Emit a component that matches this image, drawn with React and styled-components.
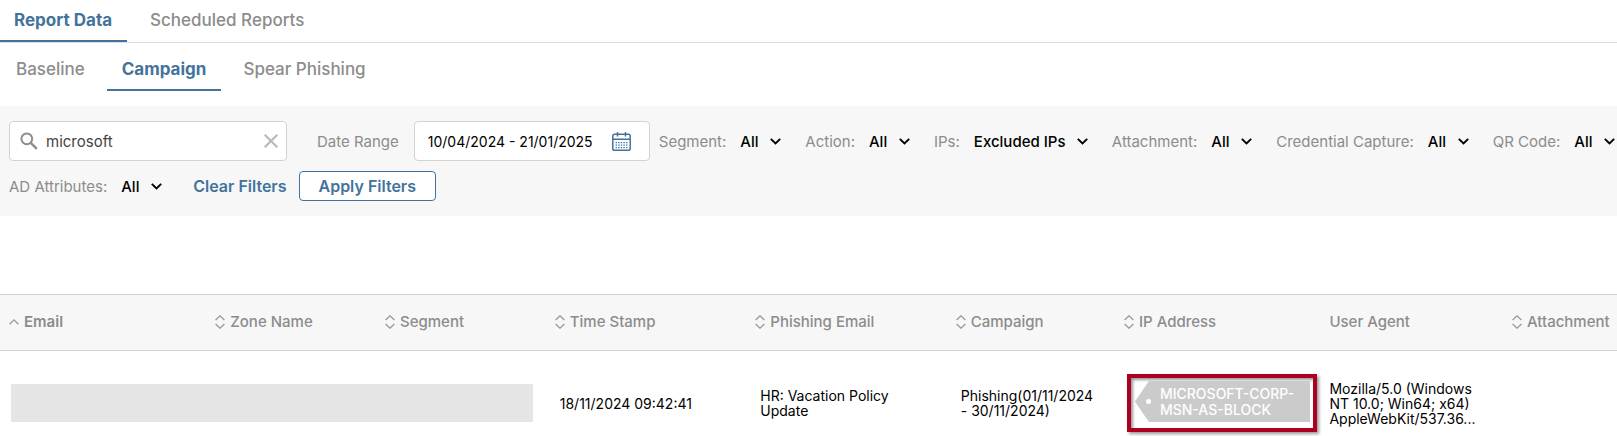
import { useState } from 'react';
import styled, { createGlobalStyle } from 'styled-components';

const GlobalStyle = createGlobalStyle`
  * {
    box-sizing: border-box;
  }
  body {
    margin: 0;
    background: #fff;
    color: #000;
    font-family: Inter, 'Open Sans', sans-serif;
    font-size: 14px;
    overflow-x: hidden;
  }
  button,
  input,
  select {
    font: inherit;
    color: inherit;
  }
`;

const MainTabs = styled.nav`
  display: flex;
  height: 43px;
  border-bottom: 1px solid #dcdcdc;
`;

const SubTabs = styled.nav`
  display: flex;
  height: 48px;
  margin-bottom: 15px;
  padding-left: 1px;
`;

const Tab = styled.button`
  padding: ${({ $sub }) => ($sub ? '5px 15px 0' : '0 15px 0 14px')};
  margin-right: ${({ $sub }) => ($sub ? '7px' : '9px')};
  border: none;
  border-bottom: 2px solid ${({ $active }) => ($active ? '#43739b' : 'transparent')};
  background: none;
  color: ${({ $active }) => ($active ? '#43739b' : '#8c8c8c')};
  font-size: 17px;
  font-weight: ${({ $active }) => ($active ? 700 : 500)};
  white-space: nowrap;
  cursor: pointer;
`;

const FilterBar = styled.form`
  display: flex;
  flex-wrap: wrap;
  align-items: center;
  gap: 10px 24px;
  padding: 15px 0 15px 9px;
  background: #f7f7f7;
  font-size: 15px;
`;

const SearchBox = styled.label`
  display: flex;
  align-items: center;
  width: 278px;
  height: 40px;
  padding: 0 8px 0 10px;
  margin-right: 6px;
  border: 1px solid #d3d3d3;
  border-radius: 4px;
  background: #fff;
  input {
    flex: 1;
    min-width: 0;
    padding: 0 0 0 8px;
    border: none;
    outline: none;
    background: none;
    color: #444;
  }
`;

const ClearButton = styled.button`
  display: flex;
  padding: 0;
  border: none;
  background: none;
  cursor: pointer;
`;

const DateField = styled.label`
  display: flex;
  align-items: center;
  gap: 15px;
  margin-right: -15px;
  color: #8c8c8c;
`;

const DateBox = styled.span`
  display: flex;
  align-items: center;
  justify-content: space-between;
  width: 236px;
  height: 40px;
  padding: 0 18px 0 13px;
  border: 1px solid #d3d3d3;
  border-radius: 4px;
  background: #fff;
  color: #000;
  input {
    width: 175px;
    padding: 0;
    border: none;
    outline: none;
    background: none;
    font-size: 14px;
  }
`;

const FilterField = styled.label`
  display: flex;
  align-items: center;
  gap: 14px;
  color: #8c8c8c;
  white-space: nowrap;
`;

const SelectWrap = styled.span`
  display: grid;
  align-items: center;
  select,
  svg {
    grid-area: 1 / 1;
  }
  select {
    padding: 0 22px 0 0;
    border: none;
    outline: none;
    background: none;
    color: #000;
    font-weight: 500;
    appearance: none;
    cursor: pointer;
  }
  svg {
    justify-self: end;
    pointer-events: none;
  }
`;

const Actions = styled.div`
  display: flex;
  align-items: center;
  gap: 12px;
  margin-left: 7px;
`;

const ActionButton = styled.button`
  height: 30px;
  padding: ${({ $outlined }) => ($outlined ? '0 19px' : '0')};
  border: ${({ $outlined }) => ($outlined ? '1px solid #43739b' : 'none')};
  border-radius: 4px;
  background: ${({ $outlined }) => ($outlined ? '#fff' : 'none')};
  color: #43739b;
  font-size: 16px;
  font-weight: 600;
  cursor: pointer;
`;

const Table = styled.table`
  width: 100%;
  margin-top: 78px;
  table-layout: fixed;
  border-collapse: separate;
  border-spacing: 0;
`;

const HeadCell = styled.th`
  width: ${({ $width }) => $width};
  height: 57px;
  padding: 0 0 2px ${({ $indent }) => $indent};
  border-top: 1px solid #d3d3d3;
  border-bottom: 1px solid #d3d3d3;
  background: #f7f7f7;
  color: #8c8c8c;
  font-size: 15px;
  font-weight: ${({ $sorted }) => ($sorted ? 600 : 500)};
  text-align: left;
  white-space: nowrap;
`;

const HeadLabel = styled.div`
  display: flex;
  align-items: center;
  gap: 5px;
`;

const Cell = styled.td`
  height: 85px;
  padding: 19px 24px 0 10px;
  line-height: 15px;
`;

const TagCell = styled(Cell)`
  padding: 19px 2px 0 8px;
`;

const Redacted = styled.div`
  height: 38px;
  margin: 0 -7px 0 1px;
  background: #e5e5e5;
`;

const Highlight = styled.div`
  height: 58px;
  padding: 3px 3px 6px 4px;
  border: 4px solid #ad0020;
  box-shadow: 2px 2px 3px rgba(0, 0, 0, 0.4), inset 2px 2px 3px rgba(0, 0, 0, 0.4);
`;

const Tag = styled.div`
  display: flex;
  align-items: center;
  gap: 9px;
  height: 41px;
  padding-left: 11px;
  background: #cbcbcb;
  clip-path: polygon(14px 0, 100% 0, 100% 100%, 14px 100%, 0 50%);
  color: #fff;
  font-weight: 500;
  line-height: 16px;
  &::before {
    content: '';
    flex: none;
    width: 5px;
    height: 5px;
    border-radius: 50%;
    background: #fff;
  }
`;

const SearchIcon = () => (
  <svg width='18' height='18' viewBox='0 0 18 18' fill='none' stroke='#8c8c8c' strokeWidth='2'>
    <circle cx='6.8' cy='6.8' r='5.4' />
    <path d='M10.8 10.8l6 6' strokeWidth='2.4' />
  </svg>
);

const CloseIcon = () => (
  <svg width='14' height='14' viewBox='0 0 14 14' fill='none' stroke='#b3b9bc' strokeWidth='2'>
    <path d='M.7.7l12.6 12.6M13.3.7L.7 13.3' />
  </svg>
);

const CalendarIcon = () => (
  <svg width='19' height='19' viewBox='0 0 19 19' fill='none' stroke='#43739b' strokeWidth='1.5'>
    <rect x='.8' y='2.2' width='17.4' height='16' rx='1.8' />
    <path d='M1 7.2h17M5.5 0v4.4M13.5 0v4.4' />
    <path d='M3.6 10.6h12M3.6 13.1h12M3.6 15.6h12' strokeWidth='1.3' strokeDasharray='1.4 1.2' />
  </svg>
);

const ChevronIcon = () => (
  <svg width='11' height='7' viewBox='0 0 11 7' fill='none' stroke='#000' strokeWidth='1.9'>
    <path d='M.8.9l4.7 4.6L10.2.9' />
  </svg>
);

const SortIcon = ({ sorted }) => (
  <svg width='10' height='14' viewBox='0 0 10 14' fill='none' stroke='#999' strokeWidth='1.3'>
    {sorted ? (
      <path d='M.6 9.3L5 4.9l4.4 4.4' />
    ) : (
      <path d='M.6 5L5 .8 9.4 5M.6 9L5 13.2 9.4 9' />
    )}
  </svg>
);

const filters = [
  { label: 'Segment:', value: 'All' },
  { label: 'Action:', value: 'All' },
  { label: 'IPs:', value: 'Excluded IPs' },
  { label: 'Attachment:', value: 'All' },
  { label: 'Credential Capture:', value: 'All' },
  { label: 'QR Code:', value: 'All' },
  { label: 'AD Attributes:', value: 'All' },
];

const columns = [
  { label: 'Email', width: '13%', indent: '9px', sort: true, sorted: true },
  { label: 'Zone Name', width: '10.5%', indent: '5px', sort: true },
  { label: 'Segment', width: '10.5%', indent: '5px', sort: true },
  { label: 'Time Stamp', width: '12.4%', indent: '5px', sort: true },
  { label: 'Phishing Email', width: '12.4%', indent: '5px', sort: true },
  { label: 'Campaign', width: '10.4%', indent: '5px', sort: true },
  { label: 'IP Address', width: '12.4%', indent: '5px', sort: true },
  { label: 'User Agent', width: '11.6%', indent: '10px' },
  { label: 'Attachment', width: 'auto', indent: '5px', sort: true },
];

const App = () => {
  const [search, setSearch] = useState('microsoft');
  const [dates, setDates] = useState('10/04/2024 - 21/01/2025');

  return (
    <>
      <GlobalStyle />
      <MainTabs>
        <Tab $active>Report Data</Tab>
        <Tab>Scheduled Reports</Tab>
      </MainTabs>
      <SubTabs>
        <Tab $sub>Baseline</Tab>
        <Tab $sub $active>
          Campaign
        </Tab>
        <Tab $sub>Spear Phishing</Tab>
      </SubTabs>
      <FilterBar onSubmit={(e) => e.preventDefault()}>
        <SearchBox>
          <SearchIcon />
          <input
            type='text'
            aria-label='Search'
            value={search}
            onChange={(e) => setSearch(e.target.value)}
          />
          <ClearButton type='button' aria-label='Clear search' onClick={() => setSearch('')}>
            <CloseIcon />
          </ClearButton>
        </SearchBox>
        <DateField>
          Date Range
          <DateBox>
            <input type='text' value={dates} onChange={(e) => setDates(e.target.value)} />
            <CalendarIcon />
          </DateBox>
        </DateField>
        {filters.map(({ label, value }) => (
          <FilterField key={label}>
            {label}
            <SelectWrap>
              <select>
                <option>{value}</option>
              </select>
              <ChevronIcon />
            </SelectWrap>
          </FilterField>
        ))}
        <Actions>
          <ActionButton type='button'>Clear Filters</ActionButton>
          <ActionButton $outlined>Apply Filters</ActionButton>
        </Actions>
      </FilterBar>
      <Table>
        <thead>
          <tr>
            {columns.map(({ label, width, indent, sort, sorted }) => (
              <HeadCell key={label} $width={width} $indent={indent} $sorted={sorted}>
                <HeadLabel>
                  {sort && <SortIcon sorted={sorted} />}
                  {label}
                </HeadLabel>
              </HeadCell>
            ))}
          </tr>
        </thead>
        <tbody>
          <tr>
            <Cell colSpan={3}>
              <Redacted />
            </Cell>
            <Cell>18/11/2024 09:42:41</Cell>
            <Cell>HR: Vacation Policy Update</Cell>
            <Cell>Phishing(01/11/2024 - 30/11/2024)</Cell>
            <TagCell>
              <Highlight>
                <Tag>MICROSOFT-CORP-MSN-AS-BLOCK</Tag>
              </Highlight>
            </TagCell>
            <Cell>Mozilla/5.0 (Windows NT 10.0; Win64; x64) AppleWebKit/537.36...</Cell>
            <Cell />
          </tr>
        </tbody>
      </Table>
    </>
  );
};

export default App;
